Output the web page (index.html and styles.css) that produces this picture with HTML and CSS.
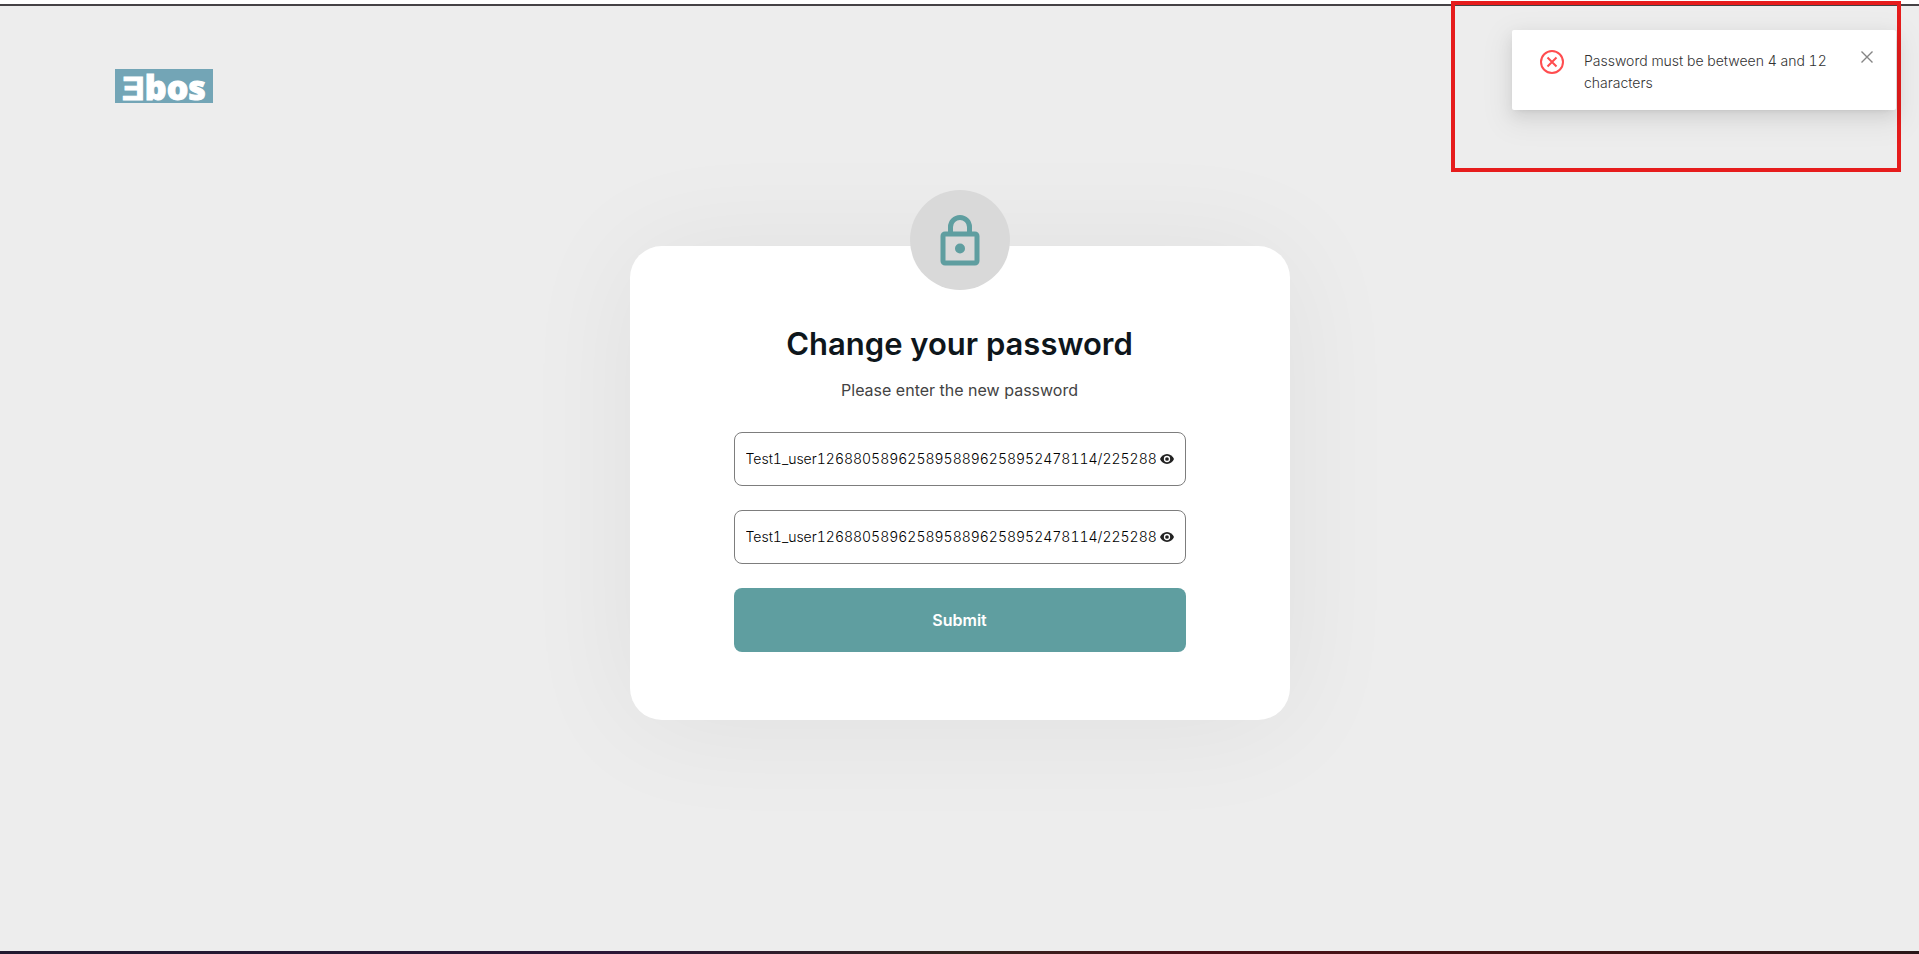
FILE: index.html
```html
<!DOCTYPE html>
<html lang="en">
<head>
<meta charset="utf-8">
<meta name="viewport" content="width=device-width, initial-scale=1">
<title>Change your password</title>
<link rel="stylesheet" href="styles.css">
</head>
<body>
<div class="page">
  <header class="header">
    <a class="logo" href="#" aria-label="Ebos home">Ǝbos</a>
  </header>
  <main class="main">
    <form class="card">
      <div class="badge">
        <svg class="badge-icon" viewBox="0 0 40 52" aria-hidden="true">
          <rect x="3" y="20" width="34" height="29" rx="2" fill="none" stroke="currentColor" stroke-width="5"/>
          <path d="M10.500 20V13a9.500 9.500 0 0 1 19 0v7" fill="none" stroke="currentColor" stroke-width="5"/>
          <circle cx="20" cy="34.500" r="5" fill="currentColor"/>
        </svg>
      </div>
      <h1 class="title">Change your password</h1>
      <p class="subtitle">Please enter the new password</p>
      <div class="field">
        <input class="field-input" type="text" aria-label="New password" value="Test1_user1268805896258958896258952478114/2252885">
        <button class="field-toggle" type="button" aria-label="Toggle new password">
          <svg class="eye" viewBox="0 0 14 12" aria-hidden="true"><path fill="currentColor" d="M7 1C3.800 1 1.200 3.200 0 6c1.200 2.800 3.800 5 7 5s5.800-2.200 7-5C12.800 3.200 10.200 1 7 1z"/><circle cx="7" cy="6" r="2.500" fill="none" stroke="#fff" stroke-width="1.300"/></svg>
        </button>
      </div>
      <div class="field">
        <input class="field-input" type="text" aria-label="Confirm password" value="Test1_user1268805896258958896258952478114/2252885">
        <button class="field-toggle" type="button" aria-label="Toggle confirm password">
          <svg class="eye" viewBox="0 0 14 12" aria-hidden="true"><path fill="currentColor" d="M7 1C3.800 1 1.200 3.200 0 6c1.200 2.800 3.800 5 7 5s5.800-2.200 7-5C12.800 3.200 10.200 1 7 1z"/><circle cx="7" cy="6" r="2.500" fill="none" stroke="#fff" stroke-width="1.300"/></svg>
        </button>
      </div>
      <button class="submit" type="submit">Submit</button>
    </form>
  </main>
</div>
<div class="highlight">
  <div class="toast" role="alert">
    <svg class="toast-icon" viewBox="0 0 24 24" aria-hidden="true"><circle cx="12" cy="12" r="11" fill="none" stroke="currentColor" stroke-width="2"/><path d="M7.500 7.500l9 9M16.500 7.500l-9 9" stroke="currentColor" stroke-width="2"/></svg>
    <p class="toast-text">Password must be between 4 and 12 characters</p>
    <button class="toast-close" type="button" aria-label="Close">
      <svg class="close-icon" viewBox="0 0 12 12" aria-hidden="true"><path d="M.5.5l11 11M11.500.5l-11 11" stroke="currentColor" stroke-width="1.400"/></svg>
    </button>
  </div>
</div>
</body>
</html>
```
FILE: styles.css
```css
*,
*::before,
*::after { box-sizing: border-box; }

body {
  margin: 0;
  background: #ededed;
  color: #0e161b;
  font-family: Inter, "Liberation Sans", sans-serif;
}

.page {
  display: flex;
  flex-direction: column;
  min-height: 100vh;
  overflow: hidden;
}

.page::before {
  content: "";
  height: 6px;
  background: #fff;
  border-bottom: 2px solid #454245;
}

.page::after {
  content: "";
  height: 3px;
  margin-top: auto;
  background: linear-gradient(90deg, #211a30, #2a1636 32%, #32251f 50%, #4a1018 62%, #421414 80%, #2a1618);
}

.header {
  display: flex;
  padding: 63px 115px 0;
}

.logo {
  width: 98px;
  height: 34px;
  background: #73a5b6;
  color: #fff;
  font: 800 34px/36px "Open Sans", sans-serif;
  text-align: center;
  text-decoration: none;
  -webkit-text-stroke: 1px #fff;
}

.main {
  display: flex;
  justify-content: center;
  padding: 143px 16px 32px;
}

.card {
  display: flex;
  flex-direction: column;
  align-items: center;
  width: 100%;
  max-width: 660px;
  padding: 0 104px 68px;
  border-radius: 32px;
  background: #fff;
  box-shadow: 0 4px 120px rgba(0, 0, 0, .06);
}

.badge {
  display: flex;
  align-items: center;
  justify-content: center;
  width: 100px;
  height: 100px;
  margin-top: -56px;
  border-radius: 50%;
  background: #d9d9d9;
  color: #5f9ea0;
}

.badge-icon {
  width: 40px;
  height: 52px;
}

.title {
  margin: 32px 0 0;
  font-size: 31px;
  font-weight: 600;
  line-height: 44px;
  white-space: nowrap;
}

.subtitle {
  margin: 12px 0 30px;
  color: #434343;
  font-size: 16px;
  line-height: 24px;
}

.field {
  display: flex;
  align-items: center;
  width: 100%;
  height: 54px;
  margin-bottom: 24px;
  padding: 0 11px;
  border: 1px solid #7d7d7d;
  border-radius: 8px;
}

.field-input {
  flex: 1;
  min-width: 0;
  padding: 0;
  border: 0;
  outline: 0;
  background: none;
  color: #000;
  font: 300 14px/22px Inter, sans-serif;
  font-variant-numeric: tabular-nums;
}

.field-toggle {
  display: flex;
  margin-left: 4px;
  padding: 0;
  border: 0;
  background: none;
  color: #222;
}

.eye {
  width: 14px;
  height: 12px;
}

.submit {
  width: 100%;
  height: 64px;
  border: 0;
  border-radius: 8px;
  background: #5f9ea0;
  color: #fff;
  font: 600 16px/24px Inter, sans-serif;
}

.highlight {
  position: absolute;
  top: 1px;
  right: 18px;
  width: 450px;
  height: 171px;
  padding: 25px 1px 0 57px;
  border: 4px solid #e61c1c;
}

.toast {
  display: flex;
  align-items: flex-start;
  height: 80px;
  padding: 20px 23px 16px 28px;
  border-radius: 2px;
  background: #fff;
  box-shadow: 0 3px 6px -4px rgba(0, 0, 0, .12), 0 6px 16px rgba(0, 0, 0, .08), 0 9px 28px 8px rgba(0, 0, 0, .05);
}

.toast-icon {
  flex: none;
  width: 24px;
  height: 24px;
  color: #ff4d4f;
}

.toast-text {
  flex: 1;
  margin: 0 20px;
  color: #333;
  font-size: 14px;
  font-weight: 300;
  font-variant-numeric: tabular-nums;
  line-height: 22px;
}

.toast-close {
  display: flex;
  padding: 1px 0 0;
  border: 0;
  background: none;
  color: #858585;
}

.close-icon {
  width: 12px;
  height: 12px;
}
```
